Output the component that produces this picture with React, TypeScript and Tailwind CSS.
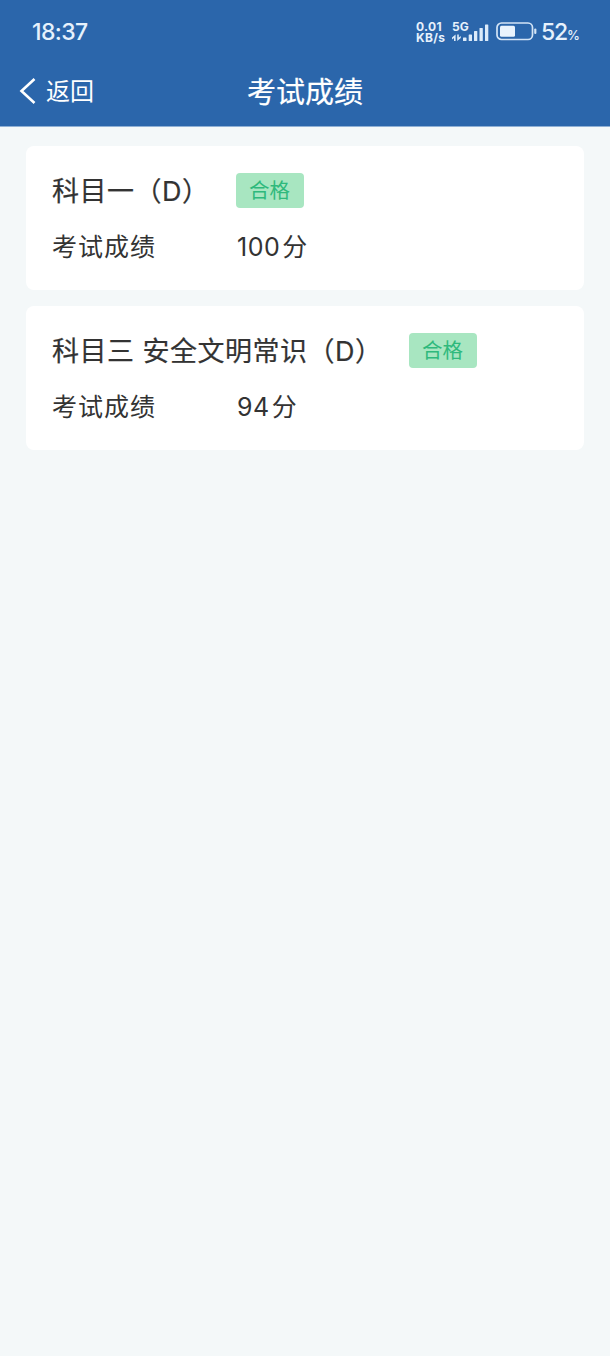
import React from 'react';

interface ExamResult {
  id: string;
  subject: string;
  score: number;
  status: string;
}

const results: ExamResult[] = [
  { id: 'subject-1', subject: '科目一（D）', score: 100, status: '合格' },
  { id: 'subject-3', subject: '科目三 安全文明常识（D）', score: 94, status: '合格' },
];

const SignalIcon: React.FC = () => (
  <svg width="38" height="20" viewBox="0 0 38 20" fill="#dcebfa">
    {/* data arrows */}
    <path d="M3.600 12.500v6.500h-1.600v-3l-2 1.500v-1.900zM5.200 19v-6.500h1.600v3l2-1.500v1.900z" />
    <rect x="11" y="15.5" width="3.5" height="3.5" rx="0.6" />
    <rect x="16.7" y="12.5" width="3.3" height="6.5" rx="0.6" />
    <rect x="22" y="9" width="3.3" height="10" rx="0.6" />
    <rect x="27.5" y="6" width="3.3" height="13" rx="0.6" />
    <rect x="33" y="2.5" width="3.3" height="16.5" rx="0.6" />
  </svg>
);

const BatteryIcon: React.FC = () => (
  <svg width="41" height="19" viewBox="0 0 41 19" fill="none">
    <rect x="1" y="1" width="35.5" height="16.5" rx="4.5" stroke="#d3e4f6" strokeWidth="1.7" />
    <rect x="4" y="3.8" width="15" height="11" rx="1.5" fill="#e9f3fd" />
    <rect x="38.2" y="6.5" width="2.2" height="5.5" rx="1.1" fill="#d3e4f6" />
  </svg>
);

const StatusBar: React.FC = () => (
  <div className="flex h-[63px] items-center justify-between pr-8 pl-8 text-[#e6f1fc]">
    <span className="pt-0.5 text-[23px] leading-none font-medium tracking-[-0.6px]">18:37</span>
    <div className="flex items-center">
      <div className="w-9 pt-px text-[12px] leading-[11px] font-bold tracking-[0.3px] whitespace-nowrap">
        <div>0.01</div>
        <div>KB/s</div>
      </div>
      <div className="relative h-5 w-[38px]">
        <span className="absolute -top-0.5 left-0 text-[12px] leading-[13px] font-bold">5G</span>
        <SignalIcon />
      </div>
      <div className="ml-1.5">
        <BatteryIcon />
      </div>
      <div className="ml-1 flex w-[37px] items-baseline pt-0.5 leading-none font-medium">
        <span className="text-[23px] tracking-[-1.2px]">52</span>
        <span className="text-[13px] tracking-[-0.5px]">%</span>
      </div>
    </div>
  </div>
);

const NavBar: React.FC = () => (
  <div className="grid h-[63px] grid-cols-3 items-center pb-[7px] text-white">
    <button className="flex items-center gap-2.5 pl-[19px] text-[24px] leading-none">
      <svg width="17" height="28" viewBox="0 0 17 28" fill="none">
        <path d="M15.5 2L2.5 14l13 12" stroke="currentColor" strokeWidth="2.6" />
      </svg>
      <span className="pt-0.5">返回</span>
    </button>
    <h1 className="pt-0.5 text-center text-[29px] leading-none whitespace-nowrap [-webkit-text-stroke:0.2px]">
      考试成绩
    </h1>
  </div>
);

const ResultCard: React.FC<{ result: ExamResult }> = ({ result }) => (
  <div className="h-36 rounded-lg bg-white px-[26px] pt-[27px] text-[#333]">
    <div className="flex h-[35px] items-center gap-[26px]">
      <h2 className="pt-0.5 text-[27px] leading-none tracking-[0.5px] whitespace-nowrap [-webkit-text-stroke:0.2px]">
        {result.subject}
      </h2>
      <span className="flex h-[35px] w-[68px] items-center justify-center rounded bg-[#a8e6c1] pt-0.5 text-[20.5px] leading-none text-[#2fb97c]">
        {result.status}
      </span>
    </div>
    <div className="mt-[22px] flex h-[35px] items-center text-[25px] leading-none">
      <span className="w-[185px] tracking-[1px]">考试成绩</span>
      <span className="flex items-center gap-0.5">
        <span className="tracking-[0.5px]">{result.score}</span>
        <span>分</span>
      </span>
    </div>
  </div>
);

const App: React.FC = () => {
  return (
    <div className="min-h-screen bg-[#f4f8f9] font-['Inter','Noto_Sans_CJK_SC',sans-serif]">
      <header className="border-b border-[#8fb0d5] bg-[#2b66ab]">
        <StatusBar />
        <NavBar />
      </header>
      <main className="flex flex-col gap-4 px-[26px] pt-[19px]">
        {results.map((result) => (
          <ResultCard key={result.id} result={result} />
        ))}
      </main>
    </div>
  );
};

export default App;
